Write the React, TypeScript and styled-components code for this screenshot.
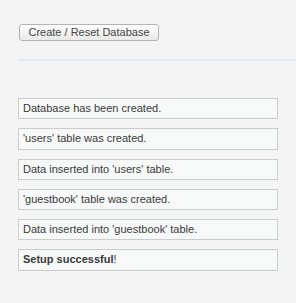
import styled, { createGlobalStyle } from 'styled-components'

const GlobalStyle = createGlobalStyle`
  body {
    margin: 0;
    background: #f4f4f4;
    font-family: 'Liberation Sans', Arial, sans-serif;
  }
`

const messages: { text: string; strong?: string }[] = [
  { text: 'Database has been created.' },
  { text: "'users' table was created." },
  { text: "Data inserted into 'users' table." },
  { text: "'guestbook' table was created." },
  { text: "Data inserted into 'guestbook' table." },
  { strong: 'Setup successful', text: '!' },
]

export default function App() {
  return (
    <>
      <GlobalStyle />
      <Page>
        <ResetButton type={'button'}>Create / Reset Database</ResetButton>
        <Divider />
        <MessageList>
          {messages.map((m, i) => (
            <Message key={i}>
              {m.strong && <strong>{m.strong}</strong>}
              {m.text}
            </Message>
          ))}
        </MessageList>
      </Page>
    </>
  )
}

//style
const Page = styled.div`
  padding: 24px 0 0 18px;
  min-height: 303px;
  box-sizing: border-box;
`

const ResetButton = styled.button`
  display: block;
  margin-left: 1px;
  height: 17px;
  width: 140px;
  padding: 0;
  border: 1px solid #b4b4b4;
  border-radius: 3px;
  background: linear-gradient(#ffffff, #e9e9e9);
  color: #444;
  font-family: 'Liberation Sans', Arial, sans-serif;
  font-size: 11px;
  line-height: 15px;
`

const Divider = styled.div`
  margin-top: 18px;
  height: 2px;
  background: #e1e8f6;
`

const MessageList = styled.div`
  display: flex;
  flex-direction: column;
  gap: 9px;
  margin-top: 37px;
  width: 260px;
`

const Message = styled.div`
  box-sizing: border-box;
  height: 21.25px;
  display: flex;
  align-items: center;
  padding: 0 4px;
  background: #f7f8f8;
  border: 1px solid #cccccc;
  color: #3a3a3a;
  font-size: 11px;
  line-height: 13px;

  strong {
    font-weight: 700;
  }
`
